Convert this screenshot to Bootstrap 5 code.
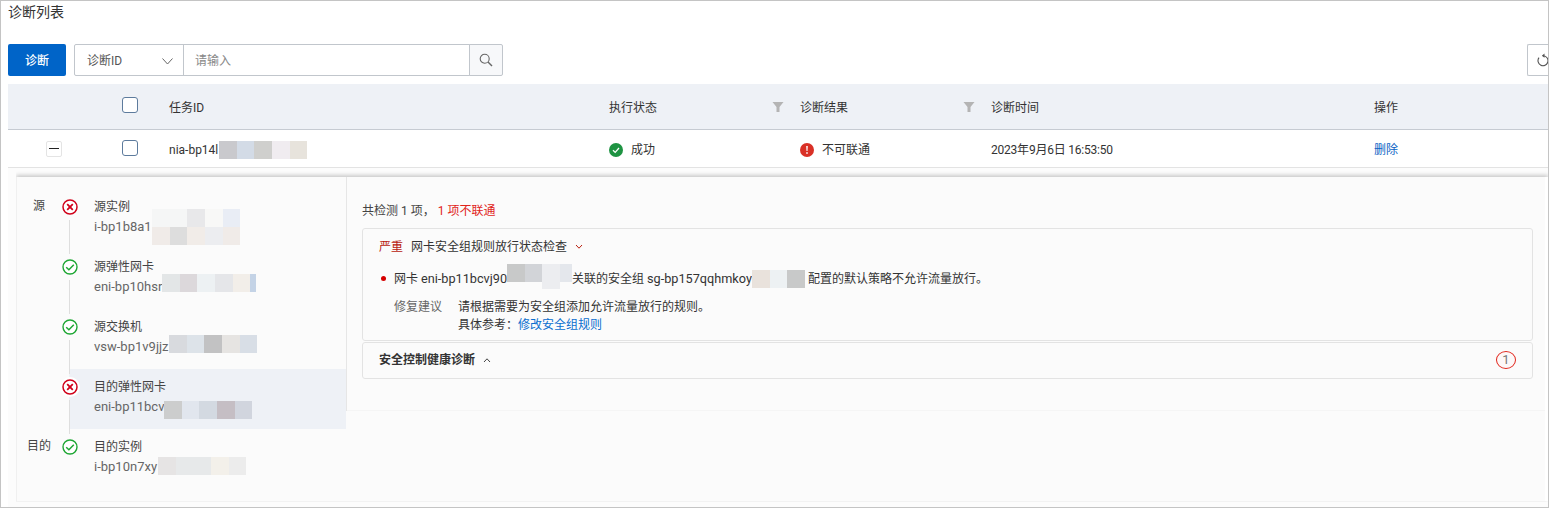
<!DOCTYPE html>
<html lang="zh-CN">
<head>
<meta charset="utf-8">
<title>诊断列表</title>
<link rel="stylesheet" href="https://cdn.jsdelivr.net/npm/bootstrap@5.3.0/dist/css/bootstrap.min.css">
<style>
html,body{height:508px;overflow:hidden;background:#fff}
body{font-family:Roboto,"Noto Sans CJK SC",sans-serif;font-size:12px;line-height:18px;color:#333}
.frame{height:508px;border:1px solid #c4c4c4;padding:0 0 0 7px;overflow:hidden}
.page-title{font-size:14px;line-height:20px;height:43px;padding-top:1px;margin:0;font-weight:400;color:#333}
.tools{height:32px;margin-bottom:8px}
.btn-diag{width:58px;height:32px;padding:2px 0 0;font-size:12px;background:#0064c8;border:0;border-radius:2px;color:#fff;font-weight:500}
.search-box{width:429px;height:32px;margin-left:8px;flex-wrap:nowrap}
.scope-pick{width:110px;height:32px;border:1px solid #c1c6cc;border-radius:2px 0 0 2px;padding:2px 10px 0 12px;background:#fff;color:#555}
.search-input{height:32px;border:1px solid #c1c6cc;border-radius:0;font-size:12px;padding:2px 11px 0;color:#333}
.search-input::placeholder{color:#888}
.search-btn{width:34px;height:32px;padding:0;border:1px solid #c1c6cc;border-radius:0 2px 2px 0;background:#f7f8fa}
.reload-btn{width:21px;height:32px;padding:0 0 0 8px;border:1px solid #c1c6cc;border-right:0;border-radius:2px 0 0 2px;background:#fff;display:flex;align-items:center;overflow:hidden}
.reload-btn svg{flex:none}
.diag-table{table-layout:fixed;width:1541px;margin:0;font-size:12px;line-height:18px;color:#333}
.diag-table th,.diag-table td{padding:3px 0 0 16px;vertical-align:middle;border-bottom:1px solid #c6cbd2;background:transparent;box-shadow:none;font-weight:400;color:#333}
.diag-table thead tr{height:45px;background:#eef1f6}
.diag-table tbody tr{height:38px}
.diag-table tbody td{border-bottom-color:#e3e3e3;padding-top:4px}
.diag-table .c-exp{width:100px;padding-left:38px}
.diag-table .c-chk{width:45px;padding-left:14px}
.c-id{width:440px}.c-st,.c-rs{width:191px;position:relative}.c-tm{width:383px}
.chk{width:16px;height:16px;margin:0;border:1px solid #5d7b9d;border-radius:2px;display:block}
.thead-chk{margin-top:-6px}
.body-chk{margin-top:-4px}
.fold{width:16px;height:16px;border:1px solid #e4e4e4;border-radius:2px;display:flex;align-items:center;justify-content:center;background:#fff;margin-top:-3px}
.fold i{display:block;width:10px;height:1px;background:#222}
.funnel{position:absolute;right:0;top:17px}
.tight-date{letter-spacing:-.22px}
.mosaic{display:inline-flex;align-items:flex-start;vertical-align:top;height:18px;flex:none}
.mosaic i{display:block;width:18px;height:18px}
.w-17{width:17px!important}.w-6{width:6px!important}.w-12{width:12px!important}.w-35{width:35px!important}
.tall{height:25px!important}
.nudge{margin-left:1px}
.up-1{margin-top:-1px}.up-2{margin-top:-2px}.up-3{margin-top:-3px}.up-8{margin-top:-8px}.dn-3{margin-top:3px}.dn-4{margin-top:4px}
.t1{background:#c9c9cd}.t2{background:#d3dbe6}.t3{background:#cfcfcd}.t4{background:#f0ecf0}.t5{background:#e7e3dc}
.t7{background:#f5f6f6}.t8{background:#e8e8ea}.t9{background:#f8f8f7}.t10{background:#e9edf5}.t11{background:#f0ebe8}.t12{background:#dddddd}.t13{background:#f1ece8}.t14{background:#ecedf0}
.t15{background:#e3e6e7}.t16{background:#dcd8db}.t17{background:#edf1f3}.t18{background:#e5e6e9}.t19{background:#f2eee9}.t20{background:#c4d3e6}
.t21{background:#d8dade}.t22{background:#dde3e9}.t23{background:#c2c2c3}.t24{background:#e6e4e2}.t25{background:#d8dee6}
.t26{background:#cccdcd}.t27{background:#e1e6ee}.t28{background:#d3d9e1}.t29{background:#c5bec4}.t30{background:#d1d5de}
.t31{background:#e6e4e4}.t32{background:#e7e9ea}.t33{background:#f3f0ea}.t34{background:#ececec}.t35{background:#e9e2dc}
.t36{background:#c8c9c9}.t37{background:#d2d4d8}.t38{background:#ecedf0}.t39{background:#e4e7ec}
.inset-wrap{background:#fcfcfc;padding:9px 0 0 8px;height:340px}
.inset{display:flex;align-items:flex-start;height:325px;background:#fbfbfb;box-shadow:0 -2px 4px rgba(0,0,0,.2);clip-path:inset(-6px 0 0 0);border-left:1px solid #f0f0f0;border-right:3px solid #fff;border-bottom:1px solid #ececec}
.path-pane{width:330px;height:234px;flex:none;border-right:1px solid #e6e6e6;padding-top:10px}
.hop{display:flex;height:60px;position:relative}
.hop.active::before{content:"";position:absolute;left:52px;right:0;top:2px;height:60px;background:#eef1f6;z-index:0}
.hop-tag{width:44px;flex:none;text-align:center;line-height:18px;padding-top:10px;position:relative;color:#444}
.hop-ico{width:24px;margin-left:1px;flex:none;position:relative;padding-top:12px;z-index:1}
.hop-ico svg{display:block;position:relative;overflow:visible;z-index:1}
.hop:not(:last-child) .hop-ico::after{content:"";position:absolute;left:7px;top:33px;height:34px;width:1px;background:#dedede}
.hop-txt{padding-left:8px;padding-top:11px;position:relative;z-index:1;line-height:19px;white-space:nowrap}
.hop-sub{color:#666;display:flex;font-size:13px}
.row-2{margin-left:58px;margin-top:-9px}
.hop-head{color:#444}
.result-pane{flex:1;height:234px;padding:25px 12px 0 15px;border-bottom:1px solid #f5f5f5}
.summary{height:19px;margin-bottom:7px;color:#444}
.txt-red{color:#e1251b}
.fold-card{border:1px solid #e3e3e3;border-radius:3px;background:#fbfbfb;margin-bottom:1px}
.fold-card.first{height:113px;padding:9px 16px}
.fold-card.second{height:37px;padding:0 16px}
.sev{color:#b8200f;margin-right:8px}
.chev{margin-left:8px;vertical-align:1px}
.finding{display:flex;align-items:flex-start;margin-top:11px;height:24px;line-height:24px;color:#333;white-space:nowrap}
.res-id{font-size:12.7px}
.dot{width:5px;height:5px;border-radius:50%;background:#d50000;margin:9px 8px 0 2px;flex:none}
.fix{display:flex;margin:7px 0 0 15px;line-height:18px}
.fix-label{width:64px;color:#666;flex:none}
.fix a{color:#0a6ecf;text-decoration:none}
.sec-title{font-weight:700;color:#333}
.count{width:20px;height:18px;border:1px solid #e1251b;border-radius:50%;color:#777;line-height:16px;text-align:center;font-size:13px;background:#fdf8f8}
.link-del{color:#0a62c4;text-decoration:none}
</style>
</head>
<body>
<div class="frame">
  <h1 class="page-title">诊断列表</h1>
  <div class="tools d-flex align-items-center">
    <button type="button" class="btn btn-diag">诊断</button>
    <div class="input-group search-box">
      <div class="scope-pick d-flex align-items-center justify-content-between"><span>诊断ID</span>
        <svg width="11" height="7" viewBox="0 0 11 7"><path d="M.5.5l5 5.5 5-5.5" fill="none" stroke="#666" stroke-width="1"/></svg></div>
      <input class="form-control search-input" type="text" placeholder="请输入">
      <button type="button" class="btn search-btn d-flex align-items-center justify-content-center" aria-label="搜索">
        <svg width="14" height="14" viewBox="0 0 14 14"><circle cx="5.7" cy="5.7" r="4.5" fill="none" stroke="#666" stroke-width="1.1"/><path d="M9 9l4 4" stroke="#666" stroke-width="1.4"/></svg>
      </button>
    </div>
    <button type="button" class="reload-btn ms-auto" aria-label="刷新">
      <svg width="14" height="14" viewBox="0 0 14 14"><path d="M7.3 2.2A5 5 0 1 1 3 4.2" fill="none" stroke="#555" stroke-width="1.1" transform="translate(0 .5)"/><path d="M8.5 .6L5.8 2.7l2.7 2z" fill="#555"/></svg>
    </button>
  </div>

  <table class="table diag-table">
    <thead>
      <tr>
        <th class="c-exp"></th>
        <th class="c-chk"><input class="form-check-input chk thead-chk" type="checkbox" aria-label="全选"></th>
        <th class="c-id">任务ID</th>
        <th class="c-st">执行状态<svg class="funnel" width="12" height="12" viewBox="0 0 12 12"><path d="M.5 1h11L7.5 6v5h-3V6z" fill="#b4b4b4"/></svg></th>
        <th class="c-rs">诊断结果<svg class="funnel" width="12" height="12" viewBox="0 0 12 12"><path d="M.5 1h11L7.5 6v5h-3V6z" fill="#b4b4b4"/></svg></th>
        <th class="c-tm">诊断时间</th>
        <th>操作</th>
      </tr>
    </thead>
    <tbody>
      <tr>
        <td class="c-exp"><div class="fold"><i></i></div></td>
        <td class="c-chk"><input class="form-check-input chk body-chk" type="checkbox" aria-label="选择"></td>
        <td><div class="d-flex align-items-center">nia-bp14l<span class="mosaic up-1 nudge"><i class="t1"></i><i class="w-17 t2"></i><i class="t3"></i><i class="t4"></i><i class="w-17 t5"></i></span></div></td>
        <td><div class="d-flex align-items-center gap-2"><svg width="14" height="14" viewBox="0 0 14 14"><circle cx="7" cy="7" r="7" fill="#1e9342"/><path d="M4 7.2l2.2 2.2L10 5" fill="none" stroke="#fff" stroke-width="1.3"/></svg>成功</div></td>
        <td><div class="d-flex align-items-center gap-2"><svg width="14" height="14" viewBox="0 0 14 14"><circle cx="7" cy="7" r="7" fill="#d93026"/><path d="M6.2 3h1.6l-.3 5h-1zM6.2 9.2h1.6v1.6H6.2z" fill="#fff"/></svg>不可联通</div></td>
        <td class="tight-date">2023年9月6日 16:53:50</td>
        <td><a href="#" class="link-del">删除</a></td>
      </tr>
    </tbody>
  </table>

  <div class="inset-wrap">
  <div class="inset">
    <div class="path-pane">
      <div class="hop">
        <div class="hop-tag">源</div>
        <div class="hop-ico"><svg width="16" height="16" viewBox="0 0 16 16"><circle cx="8" cy="8" r="7" fill="#fff" stroke="#d0021b" stroke-width="1.5"/><path d="M5.2 5.2l5.6 5.6M10.8 5.2l-5.6 5.6" stroke="#d0021b" stroke-width="1.8"/></svg></div>
        <div class="hop-txt"><div class="hop-head">源实例</div>
          <div class="hop-sub">i-bp1b8a1<span class="mosaic up-8"><i class="t7"></i><i class="w-17 t7"></i><i class="t8"></i><i class="t9"></i><i class="w-17 t10"></i></span></div>
          <div class="row-2"><span class="mosaic"><i class="t11"></i><i class="w-17 t12"></i><i class="t13"></i><i class="t14"></i><i class="w-17 t11"></i></span></div></div>
      </div>
      <div class="hop">
        <div class="hop-tag"></div>
        <div class="hop-ico"><svg width="16" height="16" viewBox="0 0 16 16"><circle cx="8" cy="8" r="7" fill="#fff" stroke="#1ea634" stroke-width="1.4"/><path d="M4.2 8.2l2.7 2.6 4.9-5" fill="none" stroke="#1ea634" stroke-width="1.5"/></svg></div>
        <div class="hop-txt"><div class="hop-head">源弹性网卡</div>
          <div class="hop-sub">eni-bp10hsr<span class="mosaic up-3"><i class="t15"></i><i class="w-17 t16"></i><i class="t17"></i><i class="t18"></i><i class="w-17 t19"></i><i class="w-6 t20"></i></span></div></div>
      </div>
      <div class="hop">
        <div class="hop-tag"></div>
        <div class="hop-ico"><svg width="16" height="16" viewBox="0 0 16 16"><circle cx="8" cy="8" r="7" fill="#fff" stroke="#1ea634" stroke-width="1.4"/><path d="M4.2 8.2l2.7 2.6 4.9-5" fill="none" stroke="#1ea634" stroke-width="1.5"/></svg></div>
        <div class="hop-txt"><div class="hop-head">源交换机</div>
          <div class="hop-sub">vsw-bp1v9jjz<span class="mosaic up-2"><i class="t21"></i><i class="w-17 t22"></i><i class="t23"></i><i class="t24"></i><i class="w-17 t25"></i></span></div></div>
      </div>
      <div class="hop active">
        <div class="hop-tag"></div>
        <div class="hop-ico"><svg width="16" height="16" viewBox="0 0 16 16"><circle cx="8" cy="8" r="10" fill="#fff"/><circle cx="8" cy="8" r="7" fill="#fff" stroke="#d0021b" stroke-width="1.5"/><path d="M5.2 5.2l5.6 5.6M10.8 5.2l-5.6 5.6" stroke="#d0021b" stroke-width="1.8"/></svg></div>
        <div class="hop-txt"><div class="hop-head">目的弹性网卡</div>
          <div class="hop-sub">eni-bp11bcv<span class="mosaic dn-4"><i class="t26"></i><i class="w-17 t27"></i><i class="t28"></i><i class="t29"></i><i class="w-17 t30"></i></span></div></div>
      </div>
      <div class="hop">
        <div class="hop-tag">目的</div>
        <div class="hop-ico"><svg width="16" height="16" viewBox="0 0 16 16"><circle cx="8" cy="8" r="7" fill="#fff" stroke="#1ea634" stroke-width="1.4"/><path d="M4.2 8.2l2.7 2.6 4.9-5" fill="none" stroke="#1ea634" stroke-width="1.5"/></svg></div>
        <div class="hop-txt"><div class="hop-head">目的实例</div>
          <div class="hop-sub">i-bp10n7xy<span class="mosaic nudge"><i class="t31"></i><i class="w-35 t32"></i><i class="t33"></i><i class="w-17 t34"></i></span></div></div>
      </div>
    </div>
    <div class="result-pane">
      <div class="summary">共检测 1 项，<span class="txt-red">&nbsp;1 项不联通</span></div>
      <div class="fold-card first">
        <div><span class="sev">严重</span>网卡安全组规则放行状态检查<svg class="chev" width="8" height="6" viewBox="0 0 8 6"><path d="M1 1l3 3.2L7 1" fill="none" stroke="#b8200f" stroke-width="1"/></svg></div>
        <div class="finding"><span class="dot"></span>网卡&nbsp;<span class="res-id">eni-bp11bcvj90</span><span class="mosaic up-3"><i class="t36"></i><i class="w-17 t37"></i><i class="tall t38"></i><i class="w-12 t39"></i></span><span>关联的安全组&nbsp;</span><span class="res-id">sg-bp157qqhmkoy</span><span class="mosaic dn-3"><i class="t35"></i><i class="w-17 t17"></i><i class="t36"></i></span><span>&nbsp;配置的默认策略不允许流量放行。</span></div>
        <div class="fix"><div class="fix-label">修复建议</div><div>请根据需要为安全组添加允许流量放行的规则。<br>具体参考：<a href="#">修改安全组规则</a></div></div>
      </div>
      <div class="fold-card second d-flex align-items-center justify-content-between">
        <div><span class="sec-title">安全控制健康诊断</span><svg class="chev" width="8" height="6" viewBox="0 0 8 6"><path d="M1 5l3-3.2L7 5" fill="none" stroke="#444" stroke-width="1"/></svg></div>
        <div class="count">1</div>
      </div>
    </div>
  </div>
  </div>
</div>
</body>
</html>
